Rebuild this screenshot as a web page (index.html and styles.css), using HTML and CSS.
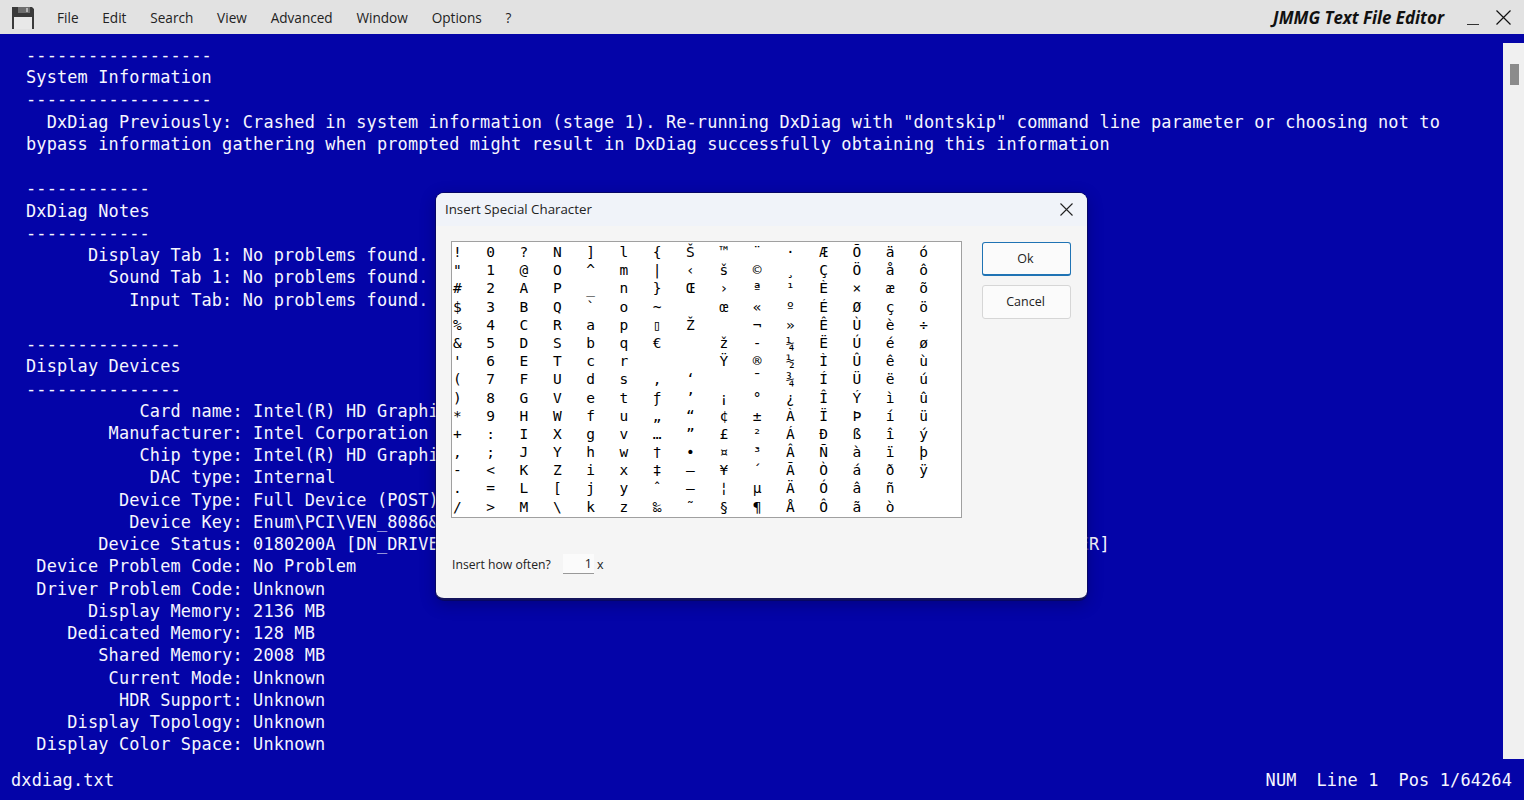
FILE: index.html
```html
<!DOCTYPE html>
<html lang="en">
<head>
<meta charset="utf-8">
<title>JMMG Text File Editor</title>
<link rel="stylesheet" href="styles.css">
</head>
<body>
<div class="app">
  <header class="menubar">
    <svg class="save-icon" width="22" height="22" viewBox="0 0 22 22"><path d="M0 0h20l2 2v20h-2V10H2v12H0z" fill="#3a3a3a"/><rect x="2" y="2" width="18" height="7" fill="#3a3a3a"/><rect x="2" y="10" width="18" height="12" fill="#e8e8e8"/><rect x="6" y="0" width="12" height="6" fill="#6e6e6e"/><rect x="14" y="1" width="2" height="4" fill="#b5b5b5"/></svg>
    <nav class="menu">
      <span>File</span><span>Edit</span><span>Search</span><span>View</span><span>Advanced</span><span>Window</span><span>Options</span><span>?</span>
    </nav>
    <div class="app-title">JMMG Text File Editor</div>
    <div class="win-min"></div>
    <svg class="win-close" width="15" height="15" viewBox="0 0 15 15"><path d="M.5.5l14 14M14.500.5l-14 14" stroke="#111" stroke-width="1.200" fill="none"/></svg>
  </header>
  <main class="body">
    <pre class="editor">------------------
System Information
------------------
  DxDiag Previously: Crashed in system information (stage 1). Re-running DxDiag with "dontskip" command line parameter or choosing not to
bypass information gathering when prompted might result in DxDiag successfully obtaining this information

------------
DxDiag Notes
------------
      Display Tab 1: No problems found.
        Sound Tab 1: No problems found.
          Input Tab: No problems found.

---------------
Display Devices
---------------
           Card name: Intel(R) HD Graphics
        Manufacturer: Intel Corporation
           Chip type: Intel(R) HD Graphics Family
            DAC type: Internal
         Device Type: Full Device (POST)
          Device Key: Enum\PCI\VEN_8086&amp;DEV_0126
       Device Status: 0180200A [DN_DRIVER_LOADED|DN_STARTED|DN_DISABLEABLE|DN_NT_ENUMERATOR|DN_NT_DRIVER]
 Device Problem Code: No Problem
 Driver Problem Code: Unknown
      Display Memory: 2136 MB
    Dedicated Memory: 128 MB
       Shared Memory: 2008 MB
        Current Mode: Unknown
         HDR Support: Unknown
    Display Topology: Unknown
 Display Color Space: Unknown</pre>
    <div class="scrollbar"><div class="thumb"></div></div>
  </main>
  <footer class="status">
    <span class="file">dxdiag.txt</span>
    <span class="num">NUM</span>
    <span class="line">Line 1</span>
    <span class="pos">Pos 1/64264</span>
  </footer>
  <section class="dialog">
    <div class="dialog-title">
      <span>Insert Special Character</span>
      <svg width="13" height="13" viewBox="0 0 13 13"><path d="M.5.5l12 12M12.500.5l-12 12" stroke="#222" stroke-width="1.100" fill="none"/></svg>
    </div>
    <div class="dialog-body">
      <div class="dialog-left">
        <div class="charlist"><span>!</span><span>"</span><span>#</span><span>$</span><span>%</span><span>&amp;</span><span>'</span><span>(</span><span>)</span><span>*</span><span>+</span><span>,</span><span>-</span><span>.</span><span>/</span><span>0</span><span>1</span><span>2</span><span>3</span><span>4</span><span>5</span><span>6</span><span>7</span><span>8</span><span>9</span><span>:</span><span>;</span><span>&lt;</span><span>=</span><span>&gt;</span><span>?</span><span>@</span><span>A</span><span>B</span><span>C</span><span>D</span><span>E</span><span>F</span><span>G</span><span>H</span><span>I</span><span>J</span><span>K</span><span>L</span><span>M</span><span>N</span><span>O</span><span>P</span><span>Q</span><span>R</span><span>S</span><span>T</span><span>U</span><span>V</span><span>W</span><span>X</span><span>Y</span><span>Z</span><span>[</span><span>\</span><span>]</span><span>^</span><span>_</span><span>`</span><span>a</span><span>b</span><span>c</span><span>d</span><span>e</span><span>f</span><span>g</span><span>h</span><span>i</span><span>j</span><span>k</span><span>l</span><span>m</span><span>n</span><span>o</span><span>p</span><span>q</span><span>r</span><span>s</span><span>t</span><span>u</span><span>v</span><span>w</span><span>x</span><span>y</span><span>z</span><span>{</span><span>|</span><span>}</span><span>~</span><span>▯</span><span>€</span><span></span><span>‚</span><span>ƒ</span><span>„</span><span>…</span><span>†</span><span>‡</span><span>ˆ</span><span>‰</span><span>Š</span><span>‹</span><span>Œ</span><span></span><span>Ž</span><span></span><span></span><span>‘</span><span>’</span><span>“</span><span>”</span><span>•</span><span>–</span><span>—</span><span>˜</span><span>™</span><span>š</span><span>›</span><span>œ</span><span></span><span>ž</span><span>Ÿ</span><span></span><span>¡</span><span>¢</span><span>£</span><span>¤</span><span>¥</span><span>¦</span><span>§</span><span>¨</span><span>©</span><span>ª</span><span>«</span><span>¬</span><span>-</span><span>®</span><span>¯</span><span>°</span><span>±</span><span>²</span><span>³</span><span>´</span><span>µ</span><span>¶</span><span>·</span><span>¸</span><span>¹</span><span>º</span><span>»</span><span>¼</span><span>½</span><span>¾</span><span>¿</span><span>À</span><span>Á</span><span>Â</span><span>Ã</span><span>Ä</span><span>Å</span><span>Æ</span><span>Ç</span><span>È</span><span>É</span><span>Ê</span><span>Ë</span><span>Ì</span><span>Í</span><span>Î</span><span>Ï</span><span>Ð</span><span>Ñ</span><span>Ò</span><span>Ó</span><span>Ô</span><span>Õ</span><span>Ö</span><span>×</span><span>Ø</span><span>Ù</span><span>Ú</span><span>Û</span><span>Ü</span><span>Ý</span><span>Þ</span><span>ß</span><span>à</span><span>á</span><span>â</span><span>ã</span><span>ä</span><span>å</span><span>æ</span><span>ç</span><span>è</span><span>é</span><span>ê</span><span>ë</span><span>ì</span><span>í</span><span>î</span><span>ï</span><span>ð</span><span>ñ</span><span>ò</span><span>ó</span><span>ô</span><span>õ</span><span>ö</span><span>÷</span><span>ø</span><span>ù</span><span>ú</span><span>û</span><span>ü</span><span>ý</span><span>þ</span><span>ÿ</span></div>
        <div class="often">
          <label>Insert how often?</label>
          <span class="often-input">1</span>
          <span class="often-x">x</span>
        </div>
      </div>
      <div class="dialog-buttons">
        <button class="btn btn-primary">Ok</button>
        <button class="btn">Cancel</button>
      </div>
    </div>
  </section>
</div>
</body>
</html>
```

FILE: styles.css
```css
* { box-sizing: border-box; }
html, body { margin: 0; height: 100%; overflow: hidden; }
.app {
  position: relative;
  display: flex;
  flex-direction: column;
  width: 1524px;
  height: 800px;
  background: #0404a8;
  color: #f6f6ff;
  font-family: "DejaVu Sans Mono", monospace;
}
.menubar {
  display: flex;
  align-items: center;
  flex: 0 0 34px;
  padding-left: 12px;
  background: #e2e2e2;
  color: #222;
}
.save-icon { flex: none; margin: 2px 23px 0 0; }
.menu {
  display: flex;
  gap: 23.800px;
  font: 13.600px "Open Sans", sans-serif;
}
.app-title {
  margin-left: auto;
  font: italic 700 16.900px "Open Sans", sans-serif;
  color: #111;
}
.win-min {
  width: 12px;
  height: 1px;
  margin: 15px 0 0 23px;
  background: #333;
}
.win-close { margin: 0 13px 0 17px; }
.body {
  flex: 1;
  display: flex;
  min-height: 0;
}
.editor {
  flex: 1;
  margin: 0;
  padding: 10px 0 0 26px;
  font: 16.900px/22.230px "DejaVu Sans Mono", monospace;
  letter-spacing: .152px;
  overflow: hidden;
}
.scrollbar {
  flex: 0 0 21px;
  margin: 9px 0 0;
  padding: 21px 5px 0 7px;
  background: #f0f0f0;
}
.thumb { height: 21px; background: #8b8b8b; }
.status {
  display: flex;
  flex: 0 0 41px;
  align-items: center;
  padding: 0 12px 0 11px;
  font-size: 16.900px;
  letter-spacing: .152px;
}
.file { margin-right: auto; }
.line { margin: 0 20px; }
.dialog {
  position: absolute;
  left: 436px;
  top: 193px;
  width: 651px;
  height: 407px;
  border-bottom: 2px solid #14145c;
  border-radius: 8px;
  background: #f5f5f5;
  color: #222;
  box-shadow: 0 0 0 1px rgba(10,10,80,.7), 0 4px 16px rgba(0,0,30,.3);
  font-family: "Open Sans", sans-serif;
  overflow: hidden;
}
.dialog-title {
  display: flex;
  justify-content: space-between;
  align-items: center;
  height: 33px;
  padding: 0 14px 1px 9px;
  background: #f0f3f9;
  font-size: 13.300px;
}
.dialog-body {
  display: flex;
  padding: 15px 16px 0 15px;
}
.dialog-left { width: 511px; }
.charlist {
  display: grid;
  grid-auto-flow: column;
  grid-template-rows: repeat(15, 18.200px);
  grid-template-columns: repeat(15, 33.300px);
  width: 511px;
  height: 277px;
  padding: 1px 0 0 1px;
  border: 1px solid #a0a0a0;
  background: #fff;
  color: #000;
  font: 14.500px/18.200px "DejaVu Sans Mono", monospace;
  overflow: hidden;
}
.often {
  display: flex;
  align-items: center;
  margin-top: 36px;
  padding-left: 1px;
  font-size: 12.200px;
}
.often label { width: 111px; }
.often-input {
  width: 31px;
  height: 20px;
  padding-right: 2px;
  background: #fbfbfb;
  border-bottom: 1px solid #999;
  text-align: right;
  line-height: 19px;
  font-size: 12.500px;
}
.often-x { margin-left: 3px; font-size: 12.500px; }
.dialog-buttons {
  display: flex;
  flex-direction: column;
  gap: 9px;
  width: 89px;
  margin: 1px 0 0 20px;
}
.btn {
  height: 34px;
  padding: 0 2px 1px 0;
  border: 1px solid #d6d6d6;
  border-radius: 3px;
  background: #fbfbfb;
  color: #222;
  font: 12.500px "Open Sans", sans-serif;
}
.btn-primary {
  border: 1px solid #1f73b4;
  border-width: 1px 1px 2px;
}
```
